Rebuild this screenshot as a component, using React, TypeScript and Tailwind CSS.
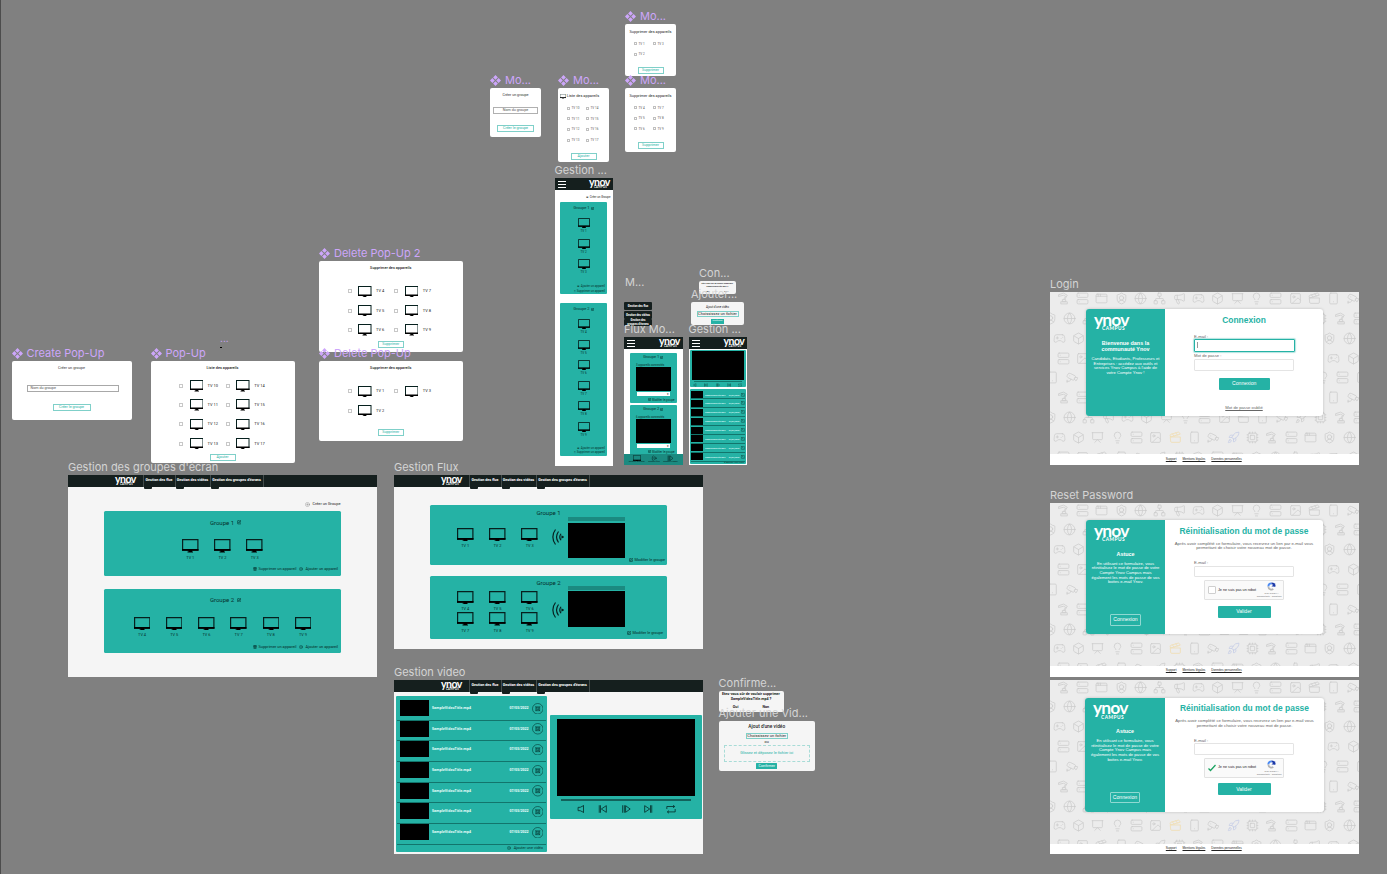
import type { ReactNode } from 'react';
import {
  AppWindow, Box, Cctv, Clapperboard, Cpu, Gamepad2, Globe, ImageIcon, Lightbulb, Megaphone, Network,
  Presentation, Rocket, Server, ShieldUser, Smartphone, SquareTerminal, CirclePlus, SquarePen, Trash2,
} from 'lucide-react';

/* ---------- canvas primitives ---------- */

function Label({ children, component = false }: { children: ReactNode; component?: boolean }) {
  return (
    <div
      className={`absolute bottom-full left-0 flex h-4 items-center gap-1 whitespace-nowrap font-['Inter',sans-serif] text-[11px] leading-4 ${
        component ? 'text-[#cda6fb]' : 'text-[#d4d4d4]'
      }`}
    >
      {component && (
        <svg viewBox="0 0 12 12" className="size-[11px] fill-[#cda6fb]">
          <path d="M6 0l2.6 2.6L6 5.2 3.4 2.600zM6 6.800l2.600 2.600L6 12 3.400 9.400zM2.600 3.400L5.200 6 2.600 8.600 0 6zM9.400 3.400L12 6 9.400 8.600 6.800 6z" />
        </svg>
      )}
      {children}
    </div>
  );
}

function Frame({ place, label, component, body = '', children }: { place: string; label?: string; component?: boolean; body?: string; children: ReactNode }) {
  return (
    <section className={`absolute ${place}`}>
      <div className={`flex h-full w-full flex-col overflow-hidden ${body}`}>{children}</div>
      {label && <Label component={component}>{label}</Label>}
    </section>
  );
}

function Tv({ className = 'w-[16.5px] h-[13.5px]' }: { className?: string }) {
  return (
    <svg viewBox="0 0 33 27" preserveAspectRatio="none" className={`shrink-0 ${className}`}>
      <path d="M1.200 1.200h30.600v21H1.200z" fill="none" stroke="#06201e" strokeWidth="2.400" />
      <path d="M0 20h33v3.500H0zM13 23h7v2h2v2H11v-2h2z" fill="#000" />
    </svg>
  );
}

function Logo({ large = false }: { large?: boolean }) {
  return large ? (
    <div className="h-[15px] w-[34px] shrink-0 font-['Lato',sans-serif] font-bold text-white">
      <div className="h-[5px] text-[17.500px] leading-[5px] tracking-[-0.900px]">ynov</div>
      <div className="mt-[4.900px] h-[5px] pl-[8px] text-[4.800px] leading-[5px] tracking-[0.500px]">CAMPUS</div>
    </div>
  ) : (
    <div className="h-[9px] w-[21px] shrink-0 font-['Lato',sans-serif] font-bold text-white">
      <div className="h-[4px] text-[10.500px] leading-[4px] tracking-[-0.500px]">ynov</div>
      <div className="mt-[2px] h-[3px] pl-[5px] text-[2.700px] leading-[3px] tracking-[0.300px]">CAMPUS</div>
    </div>
  );
}

/* ---------- pop-ups ---------- */

function OutlineButton({ className, children }: { className: string; children: ReactNode }) {
  return (
    <div className={`flex h-[7px] shrink-0 items-center justify-center border border-[#7fd0c9] pt-[0.600px] text-[3.700px] leading-none text-[#25b2a5] ${className}`}>
      {children}
    </div>
  );
}

function DeviceCell({ name }: { name: string }) {
  return (
    <div className="flex w-[46.800px] items-center">
      <span className="size-[4px] border-[0.500px] border-[#c8c8c8]" />
      <Tv className="ml-[6.500px] h-[11.500px] w-[13.500px]" />
      <span className="ml-[4.500px] whitespace-nowrap text-[4px] leading-[4px] text-[#222]">{name}</span>
    </div>
  );
}

function DevicePopup({ title, rows, button, gap, first }: { title: string; rows: string[][]; button: string; gap: string; first: string }) {
  return (
    <>
      <div className="pt-[5px] text-center text-[3.800px] font-medium leading-[4px] text-[#222]">{title}</div>
      <div className={`flex flex-col gap-[7.800px] pl-[28.500px] ${first}`}>
        {rows.map((r) => (
          <div key={r[0]} className="flex h-[11.500px]">
            {r.map((n) => <DeviceCell key={n} name={n} />)}
          </div>
        ))}
      </div>
      <OutlineButton className={`w-[26px] self-center ${gap}`}>{button}</OutlineButton>
    </>
  );
}

function MobilePopup({ title, rows, button, gap, icon }: { title: string; rows: string[][]; button: string; gap: string; icon?: boolean }) {
  return (
    <>
      <div className={`flex items-center justify-center whitespace-nowrap pt-[6px] text-[3.900px] leading-[4px] text-[#222] ${icon ? 'pr-[8px]' : ''}`}>
        {icon && <Tv className="mr-px h-[4.500px] w-[6px]" />}
        {title}
      </div>
      <div className="mt-[7.500px] flex flex-col gap-[6.700px] pl-[9px]">
        {rows.map((r) => (
          <div key={r[0]} className="flex h-[4px]">
            {r.map((n) => (
              <div key={n} className="flex w-[19px] items-center gap-[1.500px] text-[3px] leading-[4px] text-[#555]">
                <span className="size-[3px] border-[0.500px] border-[#c0c0c0]" />
                {n}
              </div>
            ))}
          </div>
        ))}
      </div>
      <OutlineButton className={`w-[26px] self-center ${gap}`}>{button}</OutlineButton>
    </>
  );
}

/* ---------- desktop screens ---------- */

function NavItem({ className, children }: { className: string; children: ReactNode }) {
  return (
    <div className={`relative flex h-full items-center justify-center whitespace-nowrap border-r-[0.500px] border-[#434c4b] ${className}`}>
      {children}
      <span className="absolute left-0 top-full h-[2px] w-[8px] rounded-b-[1px] bg-[#151f1e]" />
    </div>
  );
}

function DesktopHeader() {
  return (
    <header className="relative z-10 flex h-[12px] shrink-0 bg-[#151f1e] pl-[47px] text-[3.700px] font-bold leading-none text-white">
      <div className="w-[28.500px] border-r-[0.500px] border-[#434c4b] pt-[2px]"><Logo /></div>
      <NavItem className="w-[32px]">Gestion des flux</NavItem>
      <NavItem className="w-[35px]">Gestion des vidéos</NavItem>
      <NavItem className="w-[53px]">Gestion des groupes d'écrans</NavItem>
    </header>
  );
}

function TvWithName({ name }: { name: string }) {
  return (
    <div className="flex w-[16.500px] flex-col items-center">
      <Tv />
      <span className="mt-[3px] whitespace-nowrap text-[3.900px] leading-[4px] text-[#06302c]">{name}</span>
    </div>
  );
}

function GroupPanel({ title, tvs }: { title: string; tvs: number[] }) {
  return (
    <div className="flex h-[64.500px] w-[237px] flex-col items-center rounded-[1.500px] bg-[#25b2a5] pt-[8.500px] text-[#06302c]">
      <div className="flex h-[6px] items-center gap-[2.500px] pl-[6px] text-[6px] leading-[6px]">{title}<SquarePen strokeWidth={3} className="size-[4.500px]" /></div>
      <div className="mt-[13.500px] flex gap-[15.700px]">{tvs.map((n) => <TvWithName key={n} name={`TV ${n}`} />)}</div>
      <div className="mt-[7.500px] flex h-[4px] items-center self-end pr-[3px] text-[3.900px] leading-[4px] text-[#062a27]">
        <Trash2 strokeWidth={3} className="mr-px size-[4px]" />Supprimer un appareil
        <CirclePlus className="ml-[3px] mr-[2px] size-[4px]" />Ajouter un appareil
      </div>
    </div>
  );
}

function Waves() {
  return (
    <svg viewBox="0 0 24 32" className="h-[16px] w-[12px] shrink-0 fill-none stroke-[#06201e] stroke-[2.400]">
      <path d="M7 1C0 10 0 22 7 31M13 5c-5 7-5 15 0 22M18 9.500c-3 4-3 9 0 13" />
      <path d="M20 14.500v3l2.500-1.500z" fill="#06201e" />
    </svg>
  );
}

function FluxPanel({ title, rows, className, rowGap, tvTop, waveTop, screenGap, footer }: { title: string; rows: number[][]; className: string; rowGap: string; tvTop: string; waveTop: string; screenGap: string; footer: string }) {
  return (
    <div className={`flex w-[237px] flex-col rounded-[1.500px] bg-[#25b2a5] pt-[4.500px] ${className}`}>
      <div className="text-center text-[6px] leading-[6px] text-[#06302c]">{title}</div>
      <div className={`flex h-[41px] items-start pl-[27px] ${rowGap}`}>
        <div className={`flex flex-col gap-px ${tvTop}`}>
          {rows.map((r) => (
            <div key={r[0]} className="flex gap-[15.700px]">{r.map((n) => <TvWithName key={n} name={`TV ${n}`} />)}</div>
          ))}
        </div>
        <div className={`ml-[14px] ${waveTop}`}><Waves /></div>
        <div className="ml-[4px] w-[57.500px]">
          <div className="h-[4px] bg-[#1b8a80]" />
          <div className={`h-[35.500px] bg-black ${screenGap}`} />
        </div>
      </div>
      <div className={`flex h-[4px] items-center gap-[1.500px] self-end text-[3.800px] leading-[4px] text-[#062a27] ${footer}`}>
        <SquarePen strokeWidth={3} className="size-[4px]" />Modifier le groupe
      </div>
    </div>
  );
}

function VideoRow() {
  return (
    <div className="flex h-[20.700px] items-start border-b border-[#12756c] pl-[3px] pr-[3px] font-['Open_Sans',sans-serif] text-[3.500px] font-bold leading-none text-[#eafffc]">
      <div className="h-[16px] w-[29px] bg-black" />
      <span className="mt-[6px] ml-[3px] text-[3.500px]">SampleVideoTitle.mp4</span>
      <span className="mt-[6px] ml-auto">07/03/2022</span>
      <svg viewBox="0 0 24 24" className="ml-[3px] mt-[2.500px] size-[11.500px] fill-none stroke-[#063c37] stroke-[1.300]">
        <circle cx="12" cy="12" r="11" />
        <path d="M8 8h8v8H8zM7 7l3 3M17 7l-3 3M7 17l3-3M17 17l-3-3M10 10h4v4h-4z" />
      </svg>
    </div>
  );
}

function PlayerIcons({ className, gap }: { className: string; gap: string }) {
  const paths = [
    'M18 3v18M18 4L10 8H5v8h5l8 4',
    'M3 3v18M6 3v18M20 4v16L8 12z',
    'M4 3v18M8 3v18M11 4l11 8-11 8z',
    'M21 3v18M18 3v18M4 4v16l12-8z',
    'M2 12V6h18M17 3l4 3-4 3M22 12v7H4M7 16l-4 3 4 3',
  ];
  return (
    <div className={`flex justify-center ${gap}`}>
      {paths.map((d) => <svg key={d} viewBox="0 0 24 24" className={`fill-none stroke-[#06302c] stroke-2 ${className}`}><path d={d} /></svg>)}
    </div>
  );
}

/* ---------- mobile screens ---------- */

function MobileHeader() {
  return (
    <header className="flex h-[12px] shrink-0 items-start justify-between bg-[#151f1e] pl-[3px] pr-[2.500px] pt-[2px]">
      <div className="mt-px flex w-[8px] flex-col gap-[2px]">
        <span className="h-px bg-white" /><span className="h-px bg-white" /><span className="h-px bg-white" />
      </div>
      <Logo />
    </header>
  );
}

function MobileGroup({ title, tvs, className }: { title: string; tvs: number[]; className: string }) {
  return (
    <div className={`ml-[5.500px] flex w-[47px] shrink-0 flex-col items-center rounded-[1px] bg-[#25b2a5] pt-[4px] text-[#06302c] ${className}`}>
      <div className="flex items-center gap-px text-[4px] leading-[4px]">{title}<SquarePen strokeWidth={3.5} className="size-[3px]" /></div>
      <div className="mt-[8px] flex flex-col gap-[6px]">
        {tvs.map((n) => (
          <div key={n} className="flex h-[14.500px] flex-col items-center">
            <Tv className="h-[10px] w-[12px]" />
            <span className="mt-[2px] text-[3px] leading-[3px]">TV {n}</span>
          </div>
        ))}
      </div>
      <div className="mt-auto self-end pb-px pr-[2px] text-right text-[2.900px] leading-[4.500px]">
        <div>⊕ Ajouter un appareil</div>
        <div>▯ Supprimer un appareil</div>
      </div>
    </div>
  );
}

function MobileFlux({ title, count }: { title: string; count: number }) {
  return (
    <div className="ml-[6px] flex h-[50px] w-[46.500px] shrink-0 flex-col rounded-[1px] bg-[#25b2a5] pt-[2px] text-[#06302c]">
      <div className="flex items-center justify-center gap-px text-[4px] leading-[4px]">{title}<SquarePen strokeWidth={3.5} className="size-[3px]" /></div>
      <div className="mt-[3.500px] pl-[6px] text-[2.900px] leading-[4px]">{count} appareils connectés</div>
      <div className="ml-[6px] mt-[0.500px] h-[24px] w-[35px] bg-black" />
      <div className="ml-[7px] mt-px flex h-[4px] w-[33px] items-center justify-end bg-white pr-px text-[3px] leading-none text-black">▾</div>
      <div className="mt-[1.500px] flex items-center gap-[0.500px] self-end pr-[2px] text-[2.800px] leading-[4px]"><SquarePen strokeWidth={3.5} className="size-[3px]" />Modifier le groupe</div>
    </div>
  );
}

/* ---------- account screens ---------- */

function RobotArm({ className }: { className?: string }) {
  return (
    <svg viewBox="0 0 24 24" className={className} fill="none" stroke="currentColor" strokeWidth="1.500">
      <path d="M3 5l9-3 7 4-5 8M4 8l8-2 4 2-4 6M10 14h6v4h-6zM7 18h12v4H7zM3 5v4" />
    </svg>
  );
}

const doodles = [
  RobotArm, Server, AppWindow, ShieldUser, Globe, Network, Megaphone, Gamepad2, Box,
  Presentation, Lightbulb, Server, ImageIcon, Clapperboard, Smartphone, Cctv, Rocket, Cpu,
];

const patternRows = [
  { start: 0, pad: 'pl-[3.500px]' },
  { start: 3, pad: '-ml-[9.500px]' },
  { start: 7, pad: '-ml-[0.500px]' },
  { start: 11, pad: 'pl-[3.500px]' },
  { start: 14, pad: '-ml-[7px]' },
  { start: 0, pad: 'pl-[3.500px]' },
  { start: 3, pad: '-ml-[9.500px]' },
  { start: 7, pad: '-ml-[0.500px]' },
  { start: 11, pad: 'pl-[3.500px]' },
];

function Doodles() {
  return (
    <div className="absolute inset-0 overflow-hidden pt-[0.500px]">
      {patternRows.map((row, r) => (
        <div key={r} className={`flex h-[19.850px] w-[340px] ${row.pad}`}>
          {Array.from({ length: 17 }, (_, i) => {
            const Icon = doodles[(row.start + i) % 18];
            const tint = r === 7 && i === 6 ? 'text-[#f0dcae]' : r === 7 && i === 9 ? 'text-[#c3cbe6]' : 'text-[#cccccc]';
            return (
              <span key={i} className={`flex w-[19.350px] shrink-0 justify-center ${tint}`}>
                <Icon className="size-[13px]" strokeWidth={1.4} />
              </span>
            );
          })}
        </div>
      ))}
    </div>
  );
}

function AccountScreen({ card, footer, children }: { card: string; footer: string; children: ReactNode }) {
  return (
    <div className="relative flex h-full flex-col bg-[#ececec] font-['Liberation_Sans',sans-serif]">
      <Doodles />
      <div className={`relative flex overflow-hidden rounded-[3px] bg-white shadow-[0_0_3px_rgba(0,0,0,0.2)] ${card}`}>{children}</div>
      <footer className={`relative mt-auto flex items-center justify-center gap-[6px] bg-white pr-px text-[3.050px] leading-none text-[#222] underline ${footer}`}>
        <span>Support</span><span>Mentions légales</span><span>Données personnelles</span>
      </footer>
    </div>
  );
}

function AccountSide({ title, text, gap, button, width = 'w-[79px]' }: { title: string[]; text: string[]; gap: string; button?: boolean; width?: string }) {
  return (
    <div className={`flex shrink-0 flex-col items-center bg-[#25b2a5] pt-[7.500px] text-white ${width}`}>
      <div className="h-[16px] self-start pl-[8px]"><Logo large /></div>
      <div className={`text-center text-[5.400px] font-bold leading-[6px] ${gap}`}>{title.map((t) => <div key={t}>{t}</div>)}</div>
      <div className="mt-[5px] whitespace-nowrap text-center text-[4.200px] leading-[4.700px]">{text.map((t) => <div key={t}>{t}</div>)}</div>
      {button && (
        <div className="mb-[8.500px] mt-auto flex h-[11.500px] w-[30.500px] items-center justify-center rounded-[1px] border-[0.500px] border-[#8fd9d2] text-[5.100px] leading-none">Connexion</div>
      )}
    </div>
  );
}

function Captcha({ checked }: { checked?: boolean }) {
  return (
    <div className="ml-[39px] mt-[3px] flex h-[20px] w-[80px] items-center rounded-[1px] border-[0.500px] border-[#e2e2e2] bg-[#fafafa] pl-[2.500px] pr-[1.500px] text-[#222]">
      {checked ? (
        <svg viewBox="0 0 16 16" className="size-[8px] shrink-0 fill-none stroke-[#1aa260] stroke-[2.500]"><path d="M1 9l4 4L15 2" /></svg>
      ) : (
        <span className="size-[8px] shrink-0 rounded-[1px] border border-[#cfcfcf] bg-white" />
      )}
      <span className="ml-[2.500px] shrink-0 whitespace-nowrap text-[3.700px] leading-none">Je ne suis pas un robot</span>
      <div className="ml-auto flex w-[20px] flex-col items-center text-[#666]">
        <svg viewBox="0 0 20 20" className="size-[9px] fill-none stroke-[4]">
          <path d="M3 10a7 7 0 0 1 7-7" stroke="#4a8af4" />
          <path d="M10 3a7 7 0 0 1 7 7" stroke="#1c3aa9" />
          <path d="M3 10a7 7 0 0 0 11 5.700" stroke="#b5b5b5" />
          <path d="M18 2v8h-8z" fill="#1c3aa9" stroke="none" />
        </svg>
        <span className="mt-px text-[2.500px] leading-[3px]">reCAPTCHA</span>
        <span className="self-end whitespace-nowrap text-[2.100px] leading-[3px]">Confidentialité - Conditions</span>
      </div>
    </div>
  );
}

function ResetScreen({ card, footer, checked, side }: { card: string; footer: string; checked?: boolean; side?: string }) {
  return (
    <AccountScreen card={card} footer={footer}>
      <AccountSide
        title={['Astuce']}
        text={['En utilisant ce formulaire, vous', 'réinitialisez le mot de passe de votre', 'Compte Ynov Campus mais', 'également les mots de passe de vos', 'boites e-mail Ynov.']}
        gap="mt-[7px]"
        width={side}
        button
      />
      <div className="flex-1">
        <div className="mt-[5.500px] text-center text-[8.450px] font-bold leading-[10px] text-[#25b2a5]">Réinitialisation du mot de passe</div>
        <div className="mt-[6px] text-center text-[4.250px] leading-[4.700px] text-[#666]">
          <div>Après avoir complété ce formulaire, vous recevrez un lien par e-mail vous</div>
          <div>permettant de choisir votre nouveau mot de passe.</div>
        </div>
        <div className="ml-[29px] mt-[10.500px] text-[4.200px] leading-[4px] text-[#666]">E-mail :</div>
        <div className="ml-[29px] mt-[0.500px] h-[11.500px] w-[100px] rounded-[1px] border-[0.500px] border-[#e4e4e4] bg-white" />
        <Captcha checked={checked} />
        <div className="ml-[52.500px] mt-[5.500px] flex h-[12px] w-[53px] items-center justify-center rounded-[1px] bg-[#25b2a5] text-[5.100px] leading-none text-white">Valider</div>
      </div>
    </AccountScreen>
  );
}

/* ---------- page ---------- */

const white = 'rounded-[2px] bg-white';

export default function App() {
  return (
    <main className="relative h-[874px] w-[1387px] overflow-hidden border-l border-[#4c4c4c] bg-[#808080] font-['Roboto',sans-serif]">
      <div className="absolute -left-px top-0 h-full w-full">
        {/* mobile pop-ups */}
        <Frame place="left-[625px] top-[24px] w-[51px] h-[52px]" label="Mo..." component body={white}>
          <MobilePopup title="Supprimer des appareils" rows={[['TV 1', 'TV 3'], ['TV 2']]} button="Supprimer" gap="mt-[10.500px]" />
        </Frame>
        <Frame place="left-[490px] top-[88px] w-[51px] h-[48.500px]" label="Mo..." component body={white}>
          <div className="pt-[5px] text-center text-[3.700px] leading-[4px] text-[#333]">Créer un groupe</div>
          <div className="mx-[3px] mt-[9.500px] flex h-[7.500px] shrink-0 items-center justify-center border-[0.500px] border-[#b0b0b0] pt-px text-[3.700px] leading-none text-[#555]">Nom du groupe</div>
          <OutlineButton className="mt-[11px] w-[37px] self-center">Créer le groupe</OutlineButton>
        </Frame>
        <Frame place="left-[558px] top-[88px] w-[51px] h-[74px]" label="Mo..." component body={white}>
          <MobilePopup icon title="Liste des appareils" rows={[['TV 10', 'TV 14'], ['TV 11', 'TV 15'], ['TV 12', 'TV 16'], ['TV 13', 'TV 17']]} button="Ajouter" gap="mt-[10.500px]" />
        </Frame>
        <Frame place="left-[625px] top-[88px] w-[51px] h-[64px]" label="Mo..." component body={white}>
          <MobilePopup title="Supprimer des appareils" rows={[['TV 4', 'TV 7'], ['TV 5', 'TV 8'], ['TV 6', 'TV 9']]} button="Supprimer" gap="mt-[11px]" />
        </Frame>

        {/* desktop pop-ups */}
        <Frame place="left-[319px] top-[261px] w-[143.500px] h-[91px]" label="Delete Pop-Up 2" component body={white}>
          <DevicePopup title="Supprimer des appareils" rows={[['TV 4', 'TV 7'], ['TV 5', 'TV 8'], ['TV 6', 'TV 9']]} button="Supprimer" first="mt-[15.500px]" gap="mt-[5.500px]" />
        </Frame>
        <Frame place="left-[11.500px] top-[361px] w-[120px] h-[59px]" label="Create Pop-Up" component body={white}>
          <div className="pt-[5px] text-center text-[3.800px] leading-[4px] text-[#333]">Créer un groupe</div>
          <div className="ml-[15.500px] mt-[14.500px] flex h-[7.500px] w-[92px] shrink-0 items-center border-[0.500px] border-[#a8a8a8] pl-[2.500px] pt-px text-[3.700px] leading-none text-[#555]">Nom du groupe</div>
          <OutlineButton className="mt-[12px] w-[38px] self-center">Créer le groupe</OutlineButton>
        </Frame>
        <Frame place="left-[150.500px] top-[361px] w-[144px] h-[101.500px]" label="Pop-Up" component body={white}>
          <DevicePopup title="Liste des appareils" rows={[['TV 10', 'TV 14'], ['TV 11', 'TV 15'], ['TV 12', 'TV 16'], ['TV 13', 'TV 17']]} button="Ajouter" first="mt-[10px]" gap="mt-[4.500px]" />
        </Frame>
        <div className="absolute left-[220px] top-[330px] font-['Inter',sans-serif] text-[10px] leading-4 text-[#cda6fb]">...</div>
        <div className="absolute left-[220px] top-[347px] h-px w-[2px] bg-black" />
        <Frame place="left-[319px] top-[361px] w-[143.500px] h-[80px]" label="Delete Pop-Up" component body={white}>
          <DevicePopup title="Supprimer des appareils" rows={[['TV 1', 'TV 3'], ['TV 2']]} button="Supprimer" first="mt-[15.500px]" gap="mt-[13px]" />
        </Frame>

        {/* mobile groups */}
        <Frame place="left-[554.500px] top-[178px] w-[58px] h-[287.500px]" label="Gestion ..." body="bg-white">
          <MobileHeader />
          <div className="mt-[5px] pr-[2px] text-right text-[2.900px] leading-[4px] text-[#222]">⊕ Créer un Groupe</div>
          <MobileGroup title="Groupe 1" tvs={[1, 2, 3]} className="mt-[3px] h-[92px]" />
          <MobileGroup title="Groupe 2" tvs={[4, 5, 6, 7, 8, 9]} className="mt-[9px] h-[152.500px]" />
        </Frame>

        {/* mobile menu and video dialogs */}
        <Frame place="left-[624px] top-[302px] w-[28px] h-[24px]" body="gap-[0.500px] text-center text-[2.800px] font-bold text-white">
          <div className="h-[8px] shrink-0 rounded-[1px] bg-[#151f1e] leading-[8px]">Gestion des flux</div>
          <div className="h-[8px] shrink-0 rounded-[1px] bg-[#151f1e] leading-[8px]">Gestion des vidéos</div>
          <div className="h-[7px] shrink-0 rounded-[1px] bg-[#151f1e] leading-[3.500px]"><div>Gestion des</div><div>groupes d'écrans</div></div>
        </Frame>
        <div className="absolute left-[625px] top-[274px] font-['Inter',sans-serif] text-[11px] leading-4 text-[#d4d4d4]">M...</div>
        <Frame place="left-[699px] top-[280.500px] w-[36.500px] h-[13.500px]" label="Con..." body="rounded-[2px] bg-[#f5f5f5] pt-[1.500px] text-center text-[2px] font-bold leading-[2.600px] text-[#222]">
          <div className="whitespace-nowrap">Etes-vous sûr de vouloir supprimer</div>
          <div>SampleVideoTitle.mp4 ?</div>
          <div className="mt-[2.500px] flex justify-around"><span>Oui</span><span>Non</span></div>
        </Frame>
        <Frame place="left-[691px] top-[302px] w-[53px] h-[23px]" label="Ajouter..." body="items-center rounded-[2px] bg-[#f5f5f5] pt-[2.500px] text-[#222]">
          <div className="text-[3px] leading-[4px]">Ajout d'une vidéo</div>
          <div className="mt-[2px] flex h-[6px] w-[42px] shrink-0 items-center justify-center border-[0.500px] border-[#7fd0c9] text-[4px] leading-none">Choississez un fichier</div>
          <div className="mt-[2.500px] h-[4.500px] w-[13px] shrink-0 bg-[#25b2a5] text-center text-[2.300px] leading-[4.500px] text-white">Confirmer</div>
        </Frame>

        {/* mobile flux */}
        <Frame place="left-[624px] top-[336.500px] w-[58.500px] h-[128.500px]" label="Flux Mo..." body="bg-white">
          <MobileHeader />
          <div className="mt-[4.500px] flex h-[100.500px] flex-col gap-[2px] overflow-hidden">
            <MobileFlux title="Groupe 1" count={3} />
            <MobileFlux title="Groupe 2" count={6} />
          </div>
          <div className="flex h-[11.500px] shrink-0 items-start justify-center gap-[3.500px] whitespace-nowrap bg-[#1b8a80] pt-px text-center text-[2.200px] leading-[2.500px] text-[#04201d]">
            <div className="flex flex-col items-center"><Tv className="h-[6.500px] w-[8px]" />Gestion groupes</div>
            <div className="flex flex-col items-center"><svg viewBox="0 0 24 24" className="size-[6.500px] fill-none stroke-current stroke-2"><path d="M9 2c-6 6-6 14 0 20M14 5c-4 4-4 10 0 14M17 9v6l4-3z" /></svg>Gestion flux</div>
            <div className="flex flex-col items-center"><svg viewBox="0 0 24 24" className="size-[6.500px] fill-none stroke-current stroke-2"><path d="M4 2v20M8 2v20M11 3l11 9-11 9z" /></svg>Gestion vidéos</div>
          </div>
        </Frame>

        {/* mobile videos */}
        <Frame place="left-[688.500px] top-[336.500px] w-[58.500px] h-[128.500px]" label="Gestion ..." body="bg-white">
          <MobileHeader />
          <div className="mx-[1.500px] mt-px h-[37.500px] shrink-0 rounded-[1px] bg-[#25b2a5] px-[2px] pt-[1.500px]">
            <div className="h-[29px] bg-black" />
            <div className="mx-[2px] mt-px h-px bg-[#12756c]" />
            <div className="mt-px"><PlayerIcons className="size-[4px]" gap="gap-[7.300px]" /></div>
          </div>
          <div className="mx-[1px] mt-[2px] flex h-[75px] shrink-0 flex-col rounded-[1px] bg-[#25b2a5] px-px pt-[1.500px]">
            {Array.from({ length: 8 }, (_, i) => (
              <div key={i} className="flex h-[8.900px] shrink-0 items-start border-b border-[#12756c] text-[2px] font-bold leading-[8px] text-[#dffaf7]">
                <div className="mt-[0.500px] h-[7px] w-[12.500px] shrink-0 bg-black" />
                <span className="ml-[2px]">SampleVideoTitle.mp4</span>
                <span className="ml-auto">07/03/2022</span>
                <SquareTerminal className="ml-[1.500px] mt-[2px] size-[4px] shrink-0 text-[#06302c]" />
              </div>
            ))}
            <div className="pr-px text-right text-[2.300px] leading-[2.500px] text-[#06302c]">⊕ Ajouter une vidéo</div>
          </div>
        </Frame>

        {/* desktop groups */}
        <Frame place="left-[68px] top-[475px] w-[309px] h-[201.500px]" label="Gestion des groupes d'écran" body="bg-[#f5f5f5]">
          <DesktopHeader />
          <div className="mt-[14.500px] flex items-center gap-[2.500px] self-end pr-[36.500px] text-[3.900px] leading-[4px] text-[#222]"><CirclePlus className="size-[5px] text-[#888]" />Créer un Groupe</div>
          <div className="mt-[4.500px] flex flex-col gap-[13px] pl-[36px]">
            <GroupPanel title="Groupe 1" tvs={[1, 2, 3]} />
            <GroupPanel title="Groupe 2" tvs={[4, 5, 6, 7, 8, 9]} />
          </div>
        </Frame>

        {/* desktop flux */}
        <Frame place="left-[394px] top-[475px] w-[309px] h-[174px]" label="Gestion Flux" body="bg-[#f5f5f5]">
          <DesktopHeader />
          <div className="mt-[18.400px] flex flex-col gap-[10.500px] pl-[36px]">
            <FluxPanel title="Groupe 1" rows={[[1, 2, 3]]} className="h-[60px]" rowGap="mt-[1.500px]" tvTop="mt-[10.500px]" waveTop="mt-[11.500px]" screenGap="mt-[1.500px]" footer="pr-[2px]" />
            <FluxPanel title="Groupe 2" rows={[[4, 5, 6], [7, 8, 9]]} className="h-[63px]" rowGap="-mt-[0.500px]" tvTop="mt-[5px]" waveTop="mt-[16px]" screenGap="mt-[1.500px]" footer="mt-[4.500px] pr-[4px]" />
          </div>
        </Frame>

        {/* desktop videos */}
        <Frame place="left-[394px] top-[680px] w-[309px] h-[174px]" label="Gestion video" body="bg-[#f5f5f5]">
          <DesktopHeader />
          <div className="flex flex-1 items-start gap-[3px] pl-[2px] pt-[4px]">
            <div className="h-[156px] w-[151px] rounded-[1px] bg-[#25b2a5] px-px pt-[4px]">
              {Array.from({ length: 7 }, (_, i) => <VideoRow key={i} />)}
              <div className="mt-[1.500px] flex h-[4px] items-center justify-end gap-[2.500px] pr-[3px] text-[3.800px] leading-[4px] text-[#06302c]"><CirclePlus className="size-[4px]" />Ajouter une vidéo</div>
            </div>
            <div className="mt-[19.400px] h-[103.500px] w-[151.500px] rounded-[1px] bg-[#25b2a5] px-[7px] pt-[3.500px]">
              <div className="h-[77px] bg-black" />
              <div className="mx-[4px] mb-[3px] mt-[3px] h-[2px] bg-[#12625b]" />
              <PlayerIcons className="size-[10px]" gap="gap-[12.600px]" />
            </div>
          </div>
        </Frame>

        {/* video dialogs */}
        <Frame place="left-[718.500px] top-[690.500px] w-[65px] h-[21px]" label="Confirme..." body="rounded-[2px] bg-[#f5f5f5] pt-[1.500px] text-center text-[3.700px] font-bold leading-[4.800px] text-[#222]">
          <div className="whitespace-nowrap">Etes-vous sûr de vouloir supprimer</div>
          <div>SampleVideoTitle.mp4 ?</div>
          <div className="mt-[3px] flex justify-center gap-[24px]"><span>Oui</span><span>Non</span></div>
        </Frame>
        <Frame place="left-[718.500px] top-[721px] w-[96.500px] h-[50px]" label="Ajouter une Vid..." body="items-center rounded-[2px] bg-[#f5f5f5] pt-[2.500px] text-[#222]">
          <div className="text-[4.800px] font-medium leading-[5px]">Ajout d'une vidéo</div>
          <div className="mt-[4px] flex h-[6px] w-[42.500px] shrink-0 items-center justify-center border-[0.500px] border-[#7fd0c9] text-[4px] leading-none">Choississez un fichier</div>
          <div className="mt-[1.500px] text-[3.800px] leading-[4px]">ou</div>
          <div className="mt-px flex h-[16.500px] w-[86px] shrink-0 items-center justify-center border border-dashed border-[#a8dcd7] text-[3.900px] leading-none text-[#25b2a5]">Glissez et déposez le fichier ici</div>
          <div className="mt-px h-[6px] w-[21px] shrink-0 rounded-[0.500px] bg-[#25b2a5] text-center text-[3.700px] leading-[6px] text-white">Confirmer</div>
        </Frame>

        {/* account screens */}
        <Frame place="left-[1050px] top-[291.500px] w-[308.500px] h-[173.500px]" label="Login">
          <AccountScreen card="ml-[36px] mt-[17.500px] h-[107px] w-[237px]" footer="h-[11px]">
            <AccountSide
              title={['Bienvenue dans la', 'communauté Ynov']}
              text={['Candidats, Etudiants, Professeurs et', 'Entreprises : accédez aux outils et', 'services Ynov Campus à l’aide de', 'votre Compte Ynov !']}
              gap="mt-[7.500px]"
            />
            <div className="flex-1 text-[#666]">
              <div className="mt-[5.500px] text-center text-[8.450px] font-bold leading-[10px] text-[#25b2a5]">Connexion</div>
              <div className="ml-[29px] mt-[10.500px] text-[4.200px] leading-[4px]">E-mail :</div>
              <div className="ml-[28.500px] flex h-[12.500px] w-[101.500px] items-center rounded-[1px] border border-[#25b2a5] bg-white pl-[2px] shadow-[0_0_1px_1px_rgba(37,178,165,0.35)]"><span className="h-[6px] w-px bg-[#999]" /></div>
              <div className="ml-[29px] mt-[2.500px] text-[4.200px] leading-[4px]">Mot de passe :</div>
              <div className="ml-[29px] mt-px h-[11.500px] w-[100px] rounded-[1px] border-[0.500px] border-[#e4e4e4] bg-white" />
              <div className="ml-[54px] mt-[7.500px] flex h-[11.500px] w-[50.500px] items-center justify-center rounded-[1px] bg-[#25b2a5] text-[5.100px] leading-none text-white">Connexion</div>
              <div className="mt-[15.500px] text-center text-[4.200px] leading-[5px] underline">Mot de passe oublié</div>
            </div>
          </AccountScreen>
        </Frame>
        <Frame place="left-[1050px] top-[503px] w-[308.500px] h-[173.500px]" label="Reset Password">
          <ResetScreen card="ml-[36px] mt-[17px] h-[114px] w-[237px]" footer="h-[11px]" />
        </Frame>
        <Frame place="left-[1050px] top-[680px] w-[308.500px] h-[173.500px]">
          <ResetScreen card="ml-[35px] mt-[17.500px] h-[114px] w-[239px]" footer="h-[9.500px]" side="w-[80px]" checked />
        </Frame>
      </div>
    </main>
  );
}
